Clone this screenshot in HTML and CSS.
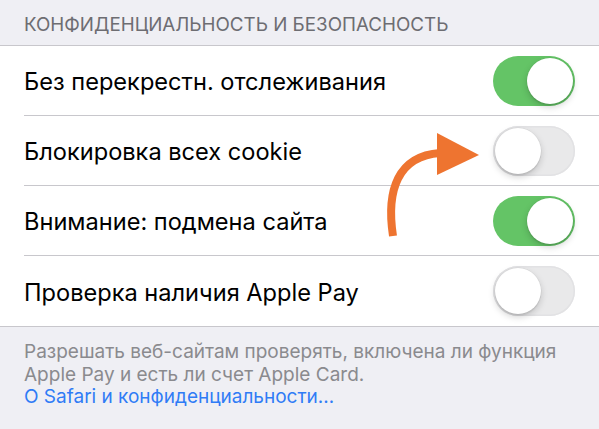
FILE: index.html
```html
<!DOCTYPE html>
<html lang="ru">
<head>
    <meta charset="UTF-8">
    <meta name="viewport" content="width=device-width, initial-scale=1.0">
    <title>Конфиденциальность и безопасность</title>
    <link rel="stylesheet" href="styles.css">
</head>
<body>
    <div class="screen">
        <div class="section-header">КОНФИДЕНЦИАЛЬНОСТЬ И БЕЗОПАСНОСТЬ</div>

        <div class="group">
            <div class="row">
                <span class="label">Без перекрестн. отслеживания</span>
                <div class="toggle on"><div class="knob"></div></div>
            </div>
            <div class="row">
                <span class="label">Блокировка всех cookie</span>
                <div class="toggle"><div class="knob"></div></div>
            </div>
            <div class="row">
                <span class="label">Внимание: подмена сайта</span>
                <div class="toggle on"><div class="knob"></div></div>
            </div>
            <div class="row">
                <span class="label">Проверка наличия Apple Pay</span>
                <div class="toggle"><div class="knob"></div></div>
            </div>
        </div>

        <div class="section-footer">
            Разрешать веб-сайтам проверять, включена ли функция<br>
            Apple Pay и есть ли счет Apple Card.<br>
            <a href="#">O Safari и конфиденциальности…</a>
        </div>

        <!-- стрелка-подсказка -->
        <svg class="arrow" width="599" height="429" viewBox="0 0 599 429">
            <path d="M393 236 C386 190 398 156 440 153" fill="none" stroke="#ee7430" stroke-width="8"/>
            <polygon points="437,133 479,155 437,175" fill="#ee7430"/>
        </svg>
    </div>
</body>
</html>
```

FILE: styles.css
```css
body {
    margin: 0;
    padding: 0;
    background-color: #efeff4;
    font-family: 'Inter', 'Roboto', sans-serif;
}

.screen {
    position: relative;
    width: 599px;
    height: 429px;
    overflow: hidden;
}

.section-header {
    height: 45px;
    box-sizing: border-box;
    padding: 13px 24px 0;
    font-size: 18.8px;
    color: #6d6d72;
    line-height: 23px;
}

.group {
    background-color: #fff;
    border-top: 1px solid #c8c7cc;
    border-bottom: 1px solid #c8c7cc;
}

.row {
    display: flex;
    align-items: center;
    justify-content: space-between;
    height: 70px;
    box-sizing: border-box;
    margin-left: 24px;
    padding-right: 24px;
    border-bottom: 1px solid #c8c7cc;
}

.row:last-child {
    border-bottom: none;
}

.label {
    font-size: 23.6px;
    color: #000;
    padding-top: 2px;
}

/* переключатель */
.toggle {
    display: flex;
    align-items: center;
    width: 82px;
    height: 50px;
    box-sizing: border-box;
    padding: 2px;
    border-radius: 25px;
    background-color: #e9e9ea;
    box-shadow: inset 0 0 0 1.5px #e2e2e4;
}

.toggle.on {
    justify-content: flex-end;
    background-color: #64c466;
    box-shadow: none;
}

.knob {
    width: 46px;
    height: 46px;
    border-radius: 50%;
    background-color: #fff;
    box-shadow: 0 3px 7px rgba(0, 0, 0, 0.18), 0 2px 1px rgba(0, 0, 0, 0.06), 0 0 0 0.5px rgba(0, 0, 0, 0.06);
}

.section-footer {
    padding: 14px 24px 0;
    font-size: 19px;
    line-height: 22.5px;
    color: #8a8a8e;
}

.section-footer a {
    color: #2f7cf6;
    text-decoration: none;
}

.arrow {
    position: absolute;
    top: 0;
    left: 0;
    pointer-events: none;
}
```
